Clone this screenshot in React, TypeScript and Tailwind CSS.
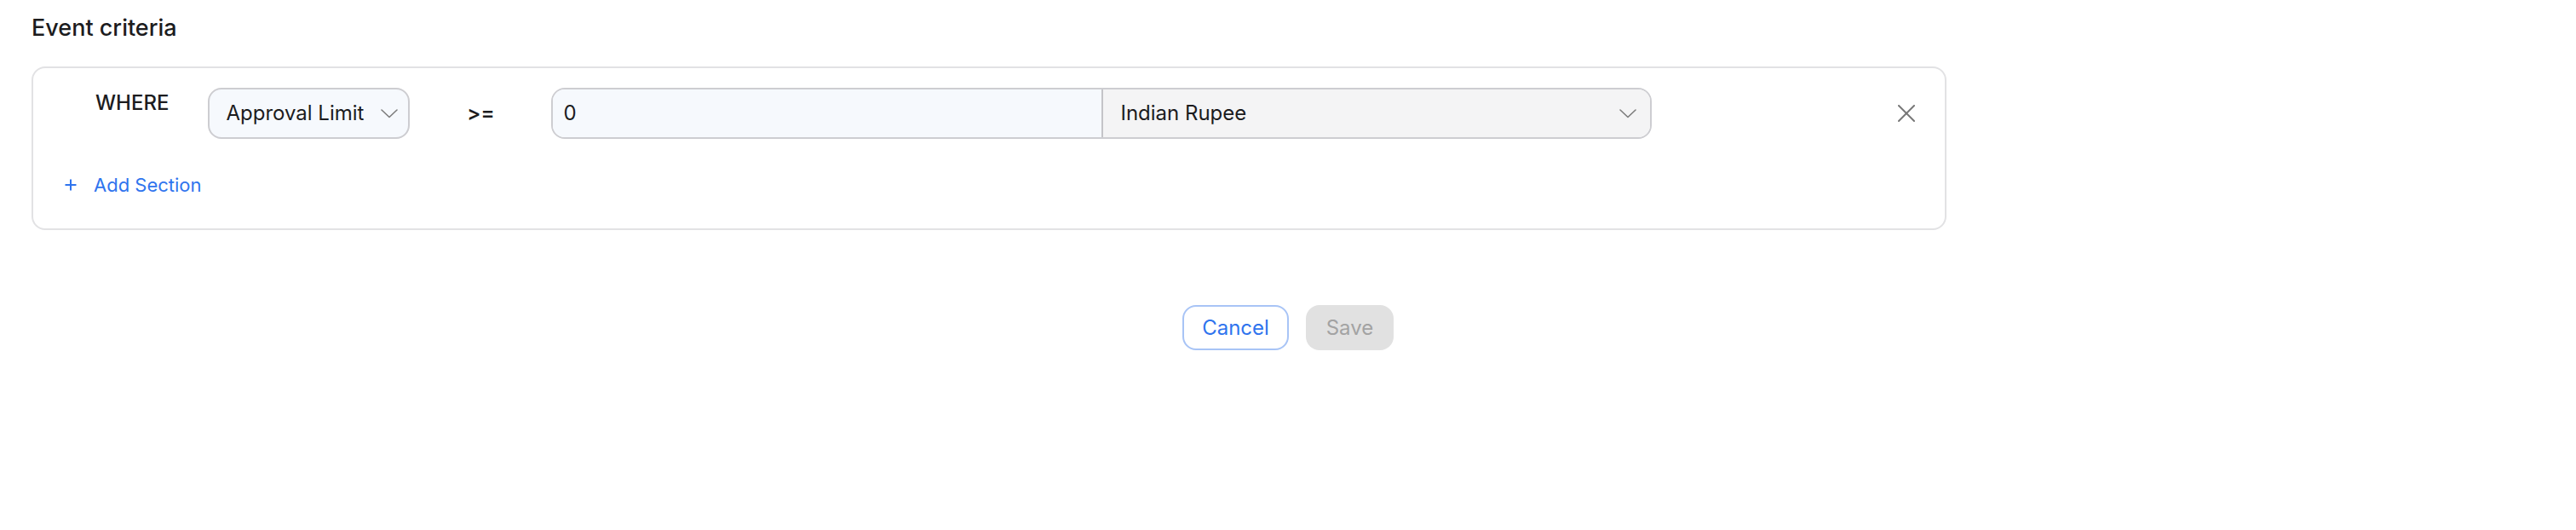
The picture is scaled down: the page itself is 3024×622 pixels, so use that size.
import React from "react";

function Chevron() {
  return (
    <svg width="20" height="11" viewBox="0 0 20 11" fill="none">
      <polyline points="1,1 10,9.5 19,1" stroke="#7d7d7d" strokeWidth="1.6" strokeLinecap="round" strokeLinejoin="round" />
    </svg>
  );
}

function CloseIcon() {
  return (
    <svg width="20" height="20" viewBox="0 0 20 20" fill="none">
      <line x1="1" y1="1" x2="19" y2="19" stroke="#777777" strokeWidth="2" strokeLinecap="round" />
      <line x1="19" y1="1" x2="1" y2="19" stroke="#777777" strokeWidth="2" strokeLinecap="round" />
    </svg>
  );
}

function PlusIcon() {
  return (
    <svg width="14" height="14" viewBox="0 0 14 14" fill="none">
      <line x1="7" y1="0.5" x2="7" y2="13.5" stroke="#2f74ee" strokeWidth="2" />
      <line x1="0.5" y1="7" x2="13.5" y2="7" stroke="#2f74ee" strokeWidth="2" />
    </svg>
  );
}

export default function App() {
  return (
    <div className="min-h-[622px] w-full bg-white font-['Inter','Noto_Sans',sans-serif] text-[#1c1c1e]">
      <div className="pl-[37px] pt-[13px]">
        <div className="text-[27px] leading-[40px] font-medium">Event criteria</div>
        <div className="mt-[25px] w-[2248px] rounded-[16px] border-2 border-[#e2e2e4] pt-[23px] pb-[33px]">
          <div className="flex items-start">
            <div className="ml-[73px] text-[24px] leading-[36px] font-medium">WHERE</div>
            <div className="ml-[46px] flex h-[60px] w-[237px] items-center justify-between rounded-[16px] border-2 border-[#cdcdd1] bg-[#f6f9fd] pl-[19px] pr-[12px]">
              <span className="text-[24px] leading-[36px]">Approval Limit</span>
              <Chevron />
            </div>
            <div className="flex h-[60px] w-[166px] items-center justify-center text-[24px] font-semibold">&gt;=</div>
            <div className="flex h-[60px] w-[1292px] overflow-hidden rounded-[16px] border-2 border-[#cdcdd1]">
              <div className="flex w-[644px] items-center bg-[#f6f9fd] pl-[12px] text-[24px]">0</div>
              <div className="w-[2px] bg-[#c4c4c8]"></div>
              <div className="flex flex-1 items-center justify-between bg-[#f4f4f5] pl-[20px] pr-[16px]">
                <span className="text-[24px] leading-[36px]">Indian Rupee</span>
                <Chevron />
              </div>
            </div>
            <div className="flex h-[60px] flex-1 items-center justify-end pr-[35px]">
              <CloseIcon />
            </div>
          </div>
          <div className="mt-[36px] ml-[37px] flex h-[36px] items-center text-[#2f74ee]">
            <PlusIcon />
            <span className="ml-[20px] text-[22px] leading-[36px]">Add Section</span>
          </div>
        </div>
      </div>
      <div className="mt-[88px] flex w-full justify-center gap-[20px]">
        <button className="h-[53px] w-[125px] rounded-[16px] border-2 border-[#a8c4f6] bg-white text-[24px] text-[#2f74ee]">
          Cancel
        </button>
        <button className="h-[53px] w-[103px] rounded-[16px] bg-[#e1e1e1] text-[24px] text-[#a3a3a3]">
          Save
        </button>
      </div>
    </div>
  );
}
